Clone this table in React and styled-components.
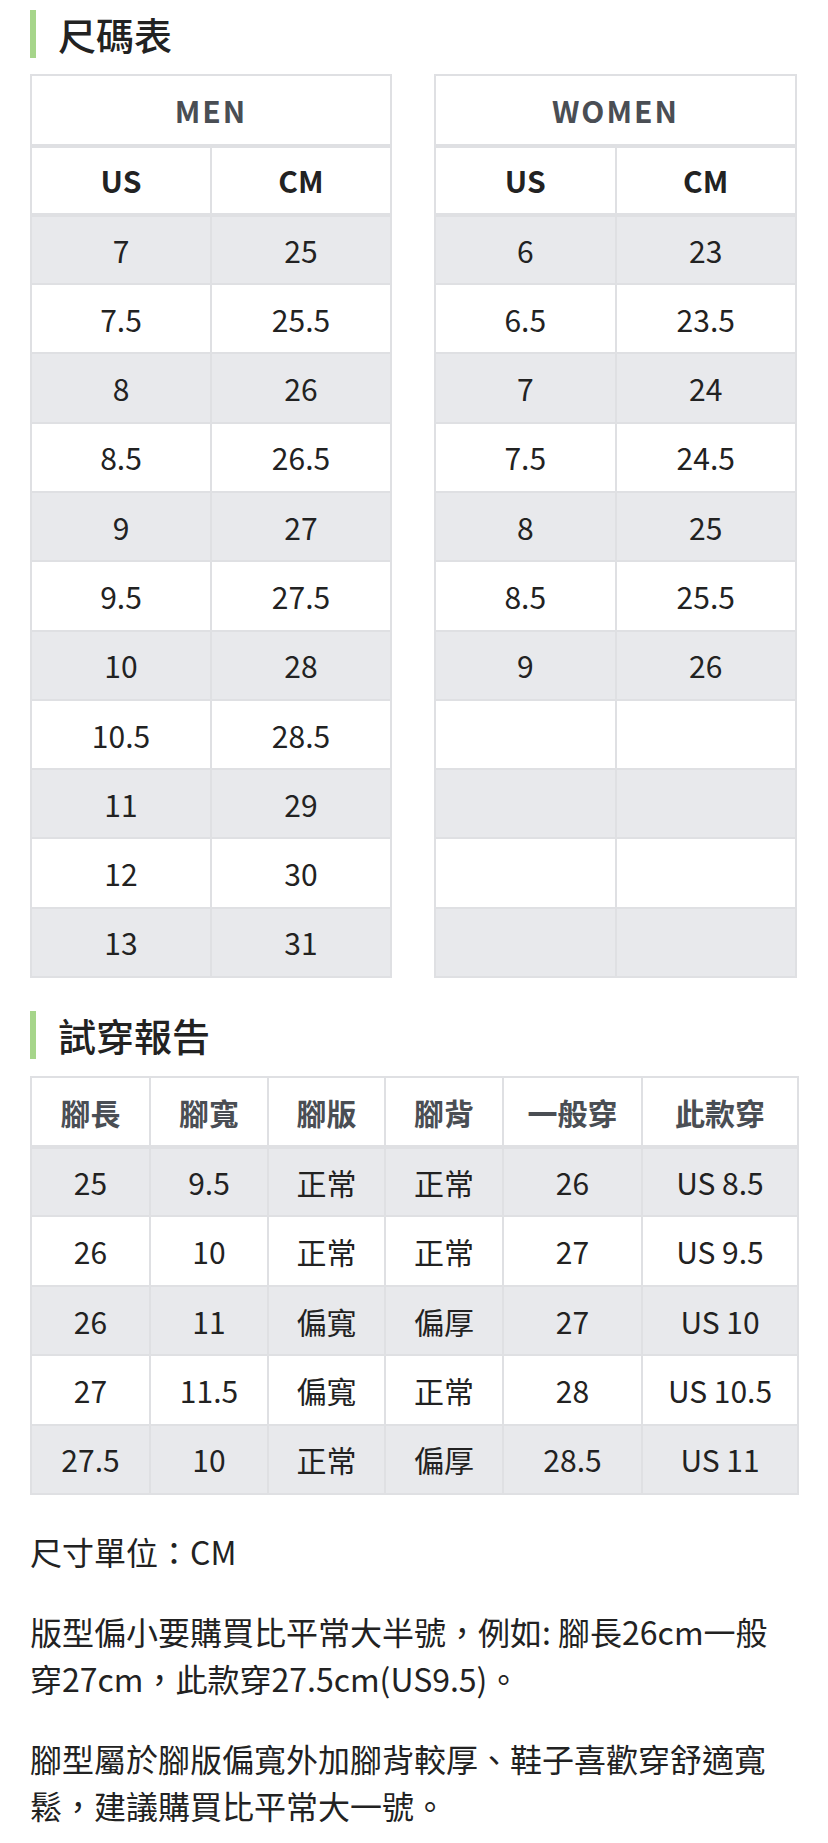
import React from 'react';
import styled, { createGlobalStyle } from 'styled-components';

const GlobalStyle = createGlobalStyle`
  body {
    margin: 0;
    background: #fff;
    font-family: "Noto Sans CJK TC", "Noto Sans", sans-serif;
    color: #222;
  }
`

const Page = styled.div`
  padding: 10px 31px 20px 30px;
`

const Title = styled.h2`
  display: flex;
  align-items: center;
  gap: 22px;
  margin: ${p => p.$top || 0}px 0 ${p => p.$bottom || 16}px;
  height: 48px;
  font-size: 38px;
  font-weight: 500;
  line-height: 48px;
  color: #222;

  &::before {
    content: '';
    width: 6px;
    height: 48px;
    background: #a6d58a;
  }
`

const TablePair = styled.div`
  display: flex;
  justify-content: space-between;
`

const Table = styled.table`
  flex: 0 0 auto;
  width: ${p => (p.$w ? `${p.$w}px` : '100%')};
  border-collapse: collapse;
  table-layout: fixed;
  border: 2px solid #dfe0e3;
`

const Row = styled.tr`
  height: ${p => p.$h || 69.3}px;
  background: ${p => (p.$gray ? '#e8e9ec' : '#fff')};
`

const Th = styled.th`
  border: 2px solid #dfe0e3;
  border-bottom-width: ${p => (p.$thick ? 4 : 2)}px;
  font-size: 30px;
  font-weight: 700;
  color: ${p => (p.$muted ? '#4a4e54' : '#222')};
  letter-spacing: ${p => (p.$spaced ? '2px' : '0')};
  text-align: center;
  padding: 0;
`

const Td = styled.td`
  border: 2px solid #dfe0e3;
  font-size: 30px;
  font-weight: 400;
  color: #222;
  text-align: center;
  padding: 0;
`

const Notes = styled.div`
  margin-top: 33px;
`

const Note = styled.p`
  margin: 0 0 33px;
  font-size: 32px;
  line-height: 47px;
  color: #222;
`

const men = [
  ['7', '25'], ['7.5', '25.5'], ['8', '26'], ['8.5', '26.5'], ['9', '27'],
  ['9.5', '27.5'], ['10', '28'], ['10.5', '28.5'], ['11', '29'], ['12', '30'], ['13', '31'],
]

const women = [
  ['6', '23'], ['6.5', '23.5'], ['7', '24'], ['7.5', '24.5'], ['8', '25'],
  ['8.5', '25.5'], ['9', '26'], ['', ''], ['', ''], ['', ''], ['', ''],
]

const trialHead = ['腳長', '腳寬', '腳版', '腳背', '一般穿', '此款穿']
const trialWidths = [119, 118, 117, 118, 139, 156]
const trial = [
  ['25', '9.5', '正常', '正常', '26', 'US 8.5'],
  ['26', '10', '正常', '正常', '27', 'US 9.5'],
  ['26', '11', '偏寬', '偏厚', '27', 'US 10'],
  ['27', '11.5', '偏寬', '正常', '28', 'US 10.5'],
  ['27.5', '10', '正常', '偏厚', '28.5', 'US 11'],
]

function SizeTable({ label, rows, width }) {
  return (
    <Table $w={width}>
      <thead>
        <Row $h={70.5}>
          <Th colSpan={2} $muted $spaced $thick>{label}</Th>
        </Row>
        <Row>
          <Th $thick>US</Th>
          <Th $thick>CM</Th>
        </Row>
      </thead>
      <tbody>
        {rows.map((r, i) => (
          <Row key={i} $gray={i % 2 === 0}>
            <Td>{r[0]}</Td>
            <Td>{r[1]}</Td>
          </Row>
        ))}
      </tbody>
    </Table>
  )
}

export default function App() {
  return (
    <>
      <GlobalStyle />
      <Page>
        <Title>尺碼表</Title>
        <TablePair>
          <SizeTable label="MEN" rows={men} width={362} />
          <SizeTable label="WOMEN" rows={women} width={363} />
        </TablePair>

        <Title $top={33} $bottom={17}>試穿報告</Title>
        <Table>
          <colgroup>
            {trialWidths.map((w, i) => <col key={i} style={{ width: w }} />)}
          </colgroup>
          <thead>
            <Row $h={70}>
              {trialHead.map(h => <Th key={h} $muted $thick>{h}</Th>)}
            </Row>
          </thead>
          <tbody>
            {trial.map((r, i) => (
              <Row key={i} $h={69.4} $gray={i % 2 === 0}>
                {r.map((c, j) => <Td key={j}>{c}</Td>)}
              </Row>
            ))}
          </tbody>
        </Table>

        <Notes>
          <Note>尺寸單位：CM</Note>
          <Note>版型偏小要購買比平常大半號，例如: 腳長26cm一般穿27cm，此款穿27.5cm(US9.5)。</Note>
          <Note>腳型屬於腳版偏寬外加腳背較厚、鞋子喜歡穿舒適寬鬆，建議購買比平常大一號。</Note>
        </Notes>
      </Page>
    </>
  )
}
